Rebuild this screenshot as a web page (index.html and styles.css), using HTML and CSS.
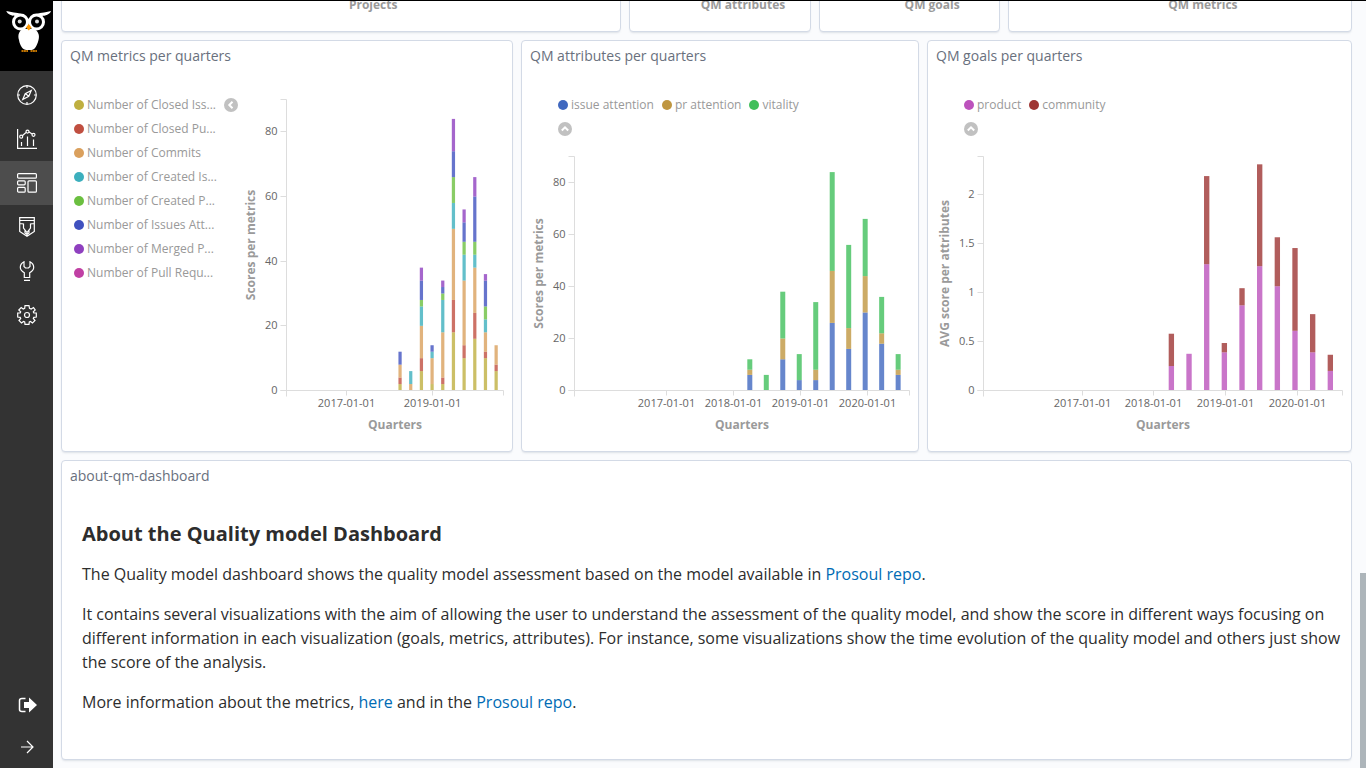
FILE: index.html
```html
<!DOCTYPE html>
<html lang="en">
<head>
<meta charset="utf-8">
<title>Quality Model Dashboard</title>
<link rel="stylesheet" href="styles.css">
</head>
<body>
<div class="app">
  <nav class="sidebar" aria-label="Main">
    <a class="logo" href="#" aria-label="Home">
      <svg viewBox="0 0 46 44" width="46" height="44">
        <path fill="#fff" d="M0.300 1C5 2.500 11 2.200 15 4C18 5.500 20.500 9 22.800 12C25 9 27.500 5.500 30.500 4C35 2.200 41 2.500 45 1C44 4.500 39 5.800 36 6L31 9H14L9.500 6C6 5.800 1.500 4.500 0.300 1Z"/>
        <circle cx="14.500" cy="12" r="8.500" fill="#fff"/><circle cx="30.500" cy="12" r="8.500" fill="#fff"/>
        <circle cx="14.500" cy="12" r="5.500"/><circle cx="30.500" cy="12" r="5.500"/>
        <circle cx="13.700" cy="11.500" r="2" fill="#ddd"/><circle cx="31" cy="11.500" r="2" fill="#ddd"/>
        <path fill="#fff" d="M17 19H28C32 21 34 25 32.500 30C31 36 28.500 40 25.500 40H20.500C17 40 14 36 13 30C11.500 25 13 21 17 19Z"/>
        <path fill="#f90" d="M22.800 14L25.500 17.500L22.800 20.500L20 17.500Z"/>
        <path stroke="#f90" stroke-width="1.600" stroke-dasharray="2 .4" d="M15.500 41H22M24.500 41H31"/>
      </svg>
    </a>
    <a class="nav-item" href="#" aria-label="Discover"><svg class="icon" viewBox="0 0 20 20"><circle cx="10" cy="10" r="9.300"/><path d="M14.200 5.500L11.800 11.300L5.800 14.500L8.200 8.700ZM8.500 8.800L11.500 11M10 1V3M10 17V19M1 10H3M17 10H19"/></svg></a>
    <a class="nav-item" href="#" aria-label="Visualize"><svg class="icon" viewBox="0 0 20 20"><path d="M.6 0V19.400H20M4.500 17V13M10.500 17V7.500M16.500 17V10.500M5.300 6.700L9 3.500M12 3L15.200 5"/><circle cx="4.200" cy="7.700" r="1.500"/><circle cx="10.500" cy="2.600" r="1.500"/><circle cx="16.500" cy="5.800" r="1.500"/></svg></a>
    <a class="nav-item nav-item--active" href="#" aria-label="Dashboard"><svg class="icon" viewBox="0 0 20 20"><rect x=".6" y=".6" width="18.800" height="4.600" rx="1"/><rect x=".6" y="7.800" width="7.600" height="4" rx="1"/><rect x=".6" y="14.400" width="7.600" height="4.800" rx="1"/><rect x="11" y="7.800" width="8.400" height="11.400" rx="1"/></svg></a>
    <a class="nav-item" href="#" aria-label="Timelion"><svg class="icon" viewBox="0 0 20 20"><path d="M2.700 .7H17.300V14.500L10 19.200L2.700 14.500ZM2.700 3.500H17.300M3 6.500L6.500 7V11L10 15.500L13.500 11V7L17 6.500M8 13.500V16L10 17.500L12 16V13.500M10 15.500V19"/></svg></a>
    <a class="nav-item" href="#" aria-label="Dev Tools"><svg class="icon" viewBox="0 0 20 20"><path d="M7 .7V5.500L8.500 7H11.500L13 5.500V.7C15.500 2 16.700 4.200 16.700 6.300C16.700 8.800 15 10.500 12.700 11.700V16.500H7.300V11.700C5 10.500 3.300 8.800 3.300 6.300C3.300 4.200 4.500 2 7 .7ZM7 19.400H13"/></svg></a>
    <a class="nav-item" href="#" aria-label="Management"><svg class="icon" viewBox="0 0 20 20"><circle cx="10" cy="10" r="2.500"/><path d="M8 .7H12L12.500 3.300L14.200 4L16.500 2.600L18.200 5L16.300 6.800L16.800 8H19.300V12L16.800 12.300L16.300 13.500L18 15.500L15.500 18L13.500 16.500L12.300 17L12 19.300H8L7.700 17L6.500 16.500L4.500 18L2 15.500L3.700 13.500L3.200 12.300L.7 12V8H3.200L3.700 6.800L1.800 5L4.200 2.600L6.200 4L7.700 3.300Z"/></svg></a>
    <span class="sidebar-space"></span>
    <a class="nav-item nav-item--foot" href="#" aria-label="Log out"><svg class="icon" viewBox="0 0 20 20"><path stroke-width="1.500" d="M8.500 3.500H5Q2.500 3.500 2.500 5.500V14.500Q2.500 16.500 5 16.500H8.500"/><path fill="#fff" stroke="none" d="M7 7H12V2.500L20 10L12 17.500V13H7Z"/></svg></a>
    <button class="nav-item nav-item--foot" type="button" aria-label="Expand"><svg class="icon" viewBox="0 0 20 20"><path d="M4 10H16M10 4L16 10L10 16"/></svg></button>
  </nav>

  <main class="content">
    <div class="row row--top">
      <section class="panel summary summary--wide">Projects</section>
      <section class="panel summary">QM attributes</section>
      <section class="panel summary">QM goals</section>
      <section class="panel summary">QM metrics</section>
    </div>

    <div class="row row--charts">
      <section class="panel">
        <h2 class="panel-title">QM metrics per quarters</h2>
        <div class="vis vis--side">
          <div class="legend legend--column">
            <div class="legend-list">
              <button type="button" class="key key--olive">Number of Closed Iss...</button>
              <button type="button" class="key key--red">Number of Closed Pu...</button>
              <button type="button" class="key key--orange">Number of Commits</button>
              <button type="button" class="key key--teal">Number of Created Is...</button>
              <button type="button" class="key key--green">Number of Created P...</button>
              <button type="button" class="key key--blue">Number of Issues Att...</button>
              <button type="button" class="key key--purple">Number of Merged P...</button>
              <button type="button" class="key key--magenta">Number of Pull Requ...</button>
            </div>
            <button type="button" class="toggle" aria-label="Toggle legend"><svg viewBox="0 0 14 14" width="14" height="14"><circle cx="7" cy="7" r="7"/><path d="M8.500 3.800L5.300 7L8.500 10.200"/></svg></button>
          </div>
          <div class="plot" id="metrics"></div>
        </div>
      </section>

      <section class="panel">
        <h2 class="panel-title">QM attributes per quarters</h2>
        <div class="vis">
          <div class="legend">
            <div class="legend-list">
              <button type="button" class="key key--royal">issue attention</button>
              <button type="button" class="key key--gold">pr attention</button>
              <button type="button" class="key key--emerald">vitality</button>
            </div>
            <button type="button" class="toggle" aria-label="Toggle legend"><svg viewBox="0 0 14 14" width="14" height="14"><circle cx="7" cy="7" r="7"/><path d="M3.800 8.500L7 5.300L10.200 8.500"/></svg></button>
          </div>
          <div class="plot" id="attributes"></div>
        </div>
      </section>

      <section class="panel">
        <h2 class="panel-title">QM goals per quarters</h2>
        <div class="vis">
          <div class="legend">
            <div class="legend-list">
              <button type="button" class="key key--orchid">product</button>
              <button type="button" class="key key--brick">community</button>
            </div>
            <button type="button" class="toggle" aria-label="Toggle legend"><svg viewBox="0 0 14 14" width="14" height="14"><circle cx="7" cy="7" r="7"/><path d="M3.800 8.500L7 5.300L10.200 8.500"/></svg></button>
          </div>
          <div class="plot" id="goals"></div>
        </div>
      </section>
    </div>

    <section class="panel about">
      <h2 class="panel-title">about-qm-dashboard</h2>
      <div class="markdown">
        <h3>About the Quality model Dashboard</h3>
        <p>The Quality model dashboard shows the quality model assessment based on the model available in <a href="#">Prosoul repo</a>.</p>
        <p>It contains several visualizations with the aim of allowing the user to understand the assessment of the quality model, and show the score in different ways focusing on different information in each visualization (goals, metrics, attributes). For instance, some visualizations show the time evolution of the quality model and others just show the score of the analysis.</p>
        <p>More information about the metrics, <a href="#">here</a> and in the <a href="#">Prosoul repo</a>.</p>
      </div>
    </section>
    <div class="scroll-thumb"></div>
  </main>
</div>
<script src="charts.js"></script>
</body>
</html>
```
FILE: styles.css
```css
* { box-sizing: border-box; }
body {
  margin: 0;
  background: #fafbfd;
  color: #2d2d2d;
  font-family: "Open Sans", "Noto Sans", sans-serif;
}
button { border: 0; padding: 0; background: none; font: inherit; color: inherit; cursor: pointer; }
a { color: #006bb4; text-decoration: none; }
h2, h3, p { margin: 0; }

.app { display: flex; height: 100vh; overflow: hidden; }

.sidebar { display: flex; flex-direction: column; flex: none; width: 53px; background: #333; }
.logo { height: 71px; margin-bottom: 2px; padding: 10px 0 0 6px; background: #000; }
.logo svg { display: block; }
.nav-item { display: flex; align-items: center; justify-content: center; height: 44px; }
.nav-item--active { background: #4d4d4d; }
.nav-item--foot { height: 42px; padding-left: 1px; }
.sidebar-space { flex: 1; }
.icon { width: 20px; height: 20px; fill: none; stroke: #fff; stroke-width: 1.2; }

.content {
  position: relative;
  display: flex;
  flex-direction: column;
  justify-content: flex-end;
  gap: 8px;
  flex: 1;
  min-width: 0;
  padding: 0 14px 8px 8px;
  border-top: 1px solid #000;
  overflow: hidden;
}
.row { display: grid; gap: 8px; flex: none; }
.row--top { grid-template-columns: 560fr 181fr 181fr 344fr; }
.row--charts { grid-template-columns: 452fr 398fr 425fr; }

.panel {
  display: flex;
  flex-direction: column;
  flex: none;
  min-width: 0;
  background: #fff;
  border: 1px solid #d3dae6;
  border-radius: 4px;
  box-shadow: 0 2px 2px -1px rgba(152, 162, 179, .3);
}
.row--charts .panel { min-height: 412px; }
.panel-title { padding: 5px 8px; font-size: 14px; line-height: 20px; font-weight: 400; color: #69707d; }

.summary { height: 64px; padding: 27px 0 0 46px; text-align: center; font-size: 12px; line-height: 18px; font-weight: 700; color: #9a9a9a; }
.summary--wide { padding-left: 64px; }

.vis { display: flex; flex-direction: column; flex: 1; padding-top: 22px; }
.vis--side { flex-direction: row; }
.legend { padding-left: 36px; font-size: 12px; line-height: 24px; color: #999; }
.legend-list { display: flex; gap: 8px; }
.key { display: block; height: 24px; text-align: left; white-space: nowrap; }
.key::before {
  content: "";
  display: inline-block;
  width: 10px;
  height: 10px;
  margin-right: 3px;
  border-radius: 50%;
  vertical-align: -1px;
  background: var(--key);
}
.legend--column { display: flex; gap: 8px; padding-left: 12px; }
.legend--column .legend-list { display: block; width: 142px; }
.legend--column .key { width: 100%; }
.toggle { display: flex; align-items: center; height: 24px; }
.toggle circle { fill: #c1c1c1; }
.toggle path { fill: none; stroke: #fff; stroke-width: 2; }
.plot { flex: 1; min-width: 0; }
.plot svg { display: block; }

.key--olive { --key: #bfaf40; }
.key--red { --key: #c04f40; }
.key--orange { --key: #daa05d; }
.key--teal { --key: #3cafbd; }
.key--green { --key: #6bbf40; }
.key--blue { --key: #4051bf; }
.key--purple { --key: #8f40bf; }
.key--magenta { --key: #c040a4; }
.key--royal { --key: #4068bf; }
.key--gold { --key: #bf9640; }
.key--emerald { --key: #40bf5b; }
.key--orchid { --key: #bc52bc; }
.key--brick { --key: #9e3533; }

.axis { fill: none; stroke: #ddd; stroke-width: 1; }
.tick { fill: #666; font-size: 11px; }
.axis-title { fill: #9a9a9a; font-size: 12px; font-weight: 700; text-anchor: middle; }
.tick--x { text-anchor: middle; }
.tick--y { text-anchor: end; }

.about { min-height: 300px; }
.markdown { padding: 27px 8px 27px 20px; font-size: 16px; line-height: 24px; }
.markdown h3 { font-size: 20px; line-height: 32px; font-weight: 700; }
.markdown p { margin-top: 16px; }
.markdown h3 + p { margin-top: 12px; }

.scroll-thumb { position: absolute; right: 0; bottom: 0; width: 6px; height: 195px; background: #adb5ba; }
```
FILE: charts.js
```js
const X_TICKS = [[0.2746, '2017-01-01'], [0.4746, '2018-01-01'], [0.6746, '2019-01-01'], [0.8746, '2020-01-01']];
const FIRST_BAR = 0.5233, BAR_STEP = 0.0492, BAR_WIDTH = 0.0149;

const charts = [
  {
    id: 'metrics', left: 48, top: 6, max: 90, yTitle: 'Scores per metrics', every: 2,
    ticks: [0, 20, 40, 60, 80],
    colors: ['#bfaf40', '#c04f40', '#daa05d', '#3cafbd', '#6bbf40', '#4051bf', '#8f40bf'],
    data: [[2, 2, 4, 0, 0, 4, 0], [0, 0, 2, 4, 0, 0, 0], [6, 4, 10, 6, 2, 6, 4], [2, 0, 8, 2, 0, 2, 0],
      [2, 2, 14, 10, 2, 2, 2], [18, 10, 22, 8, 8, 8, 10], [10, 4, 20, 8, 4, 6, 4],
      [16, 8, 14, 4, 4, 14, 6], [10, 2, 6, 4, 4, 8, 2], [6, 2, 6, 0, 0, 0, 0]]
  },
  {
    id: 'attributes', left: 52, top: 15, max: 90, yTitle: 'Scores per metrics', every: 1,
    ticks: [0, 20, 40, 60, 80],
    colors: ['#4068bf', '#bf9640', '#40bf5b'],
    data: [[6, 2, 4], [0, 0, 6], [12, 8, 18], [4, 0, 10], [4, 4, 26], [26, 20, 38], [16, 8, 32],
      [30, 14, 22], [18, 4, 14], [6, 2, 6]]
  },
  {
    id: 'goals', left: 55, top: 15, max: 2.39, yTitle: 'AVG score per attributes', every: 1,
    ticks: [0, 0.5, 1, 1.5, 2],
    colors: ['#bc52bc', '#9e3533'],
    data: [[.25, .33], [.375, 0], [1.29, .9], [.39, .095], [.87, .175], [1.27, 1.04], [1.065, .5],
      [.61, .845], [.39, .39], [.2, .165]]
  }
];

function draw(c) {
  const host = document.getElementById(c.id);
  host.textContent = '';
  const w = host.clientWidth, h = host.clientHeight;
  const l = c.left + 0.5, r = w - 8.5, t = c.top + 0.5, b = Math.round(h - 61) + 0.5;
  const span = r - l, scale = (b - t) / c.max;
  let out = '';
  c.data.forEach((stack, i) => {
    let y = b;
    const bw = span * BAR_WIDTH;
    const x = l + span * (FIRST_BAR + i * BAR_STEP) - bw / 2;
    stack.forEach((v, s) => {
      if (!v) return;
      y -= v * scale;
      out += `<rect x="${x}" y="${y}" width="${bw}" height="${v * scale}" fill="${c.colors[s]}" fill-opacity=".8"/>`;
    });
  });
  let path = `M${l - 6} ${t}H${l}V${b + 6}M${l - 6} ${b}H${r}V${b + 5}`;
  c.ticks.forEach(v => {
    const y = Math.round(b - v * scale - 0.5) + 0.5;
    path += `M${l - 6} ${y}H${l}`;
    out += `<text class="tick tick--y" x="${l - 9}" y="${y + 3}">${v}</text>`;
  });
  X_TICKS.forEach(([f, label], i) => {
    if (i % c.every) return;
    const x = Math.round(l + span * f - 0.5) + 0.5;
    path += `M${x} ${b}V${b + 5}`;
    out += `<text class="tick tick--x" x="${x}" y="${b + 16}">${label}</text>`;
  });
  const mid = (t + b) / 2, tx = c.id === 'goals' ? l - 35 : l - 32;
  out += `<path class="axis" d="${path}"/>`;
  out += `<text class="axis-title" x="${(l + r) / 2}" y="${b + 38}">Quarters</text>`;
  out += `<text class="axis-title" transform="translate(${tx} ${mid}) rotate(-90)">${c.yTitle}</text>`;
  host.innerHTML = `<svg width="${w}" height="${h}" role="img" aria-label="${c.yTitle}">${out}</svg>`;
}

charts.forEach(draw);
window.addEventListener('resize', () => charts.forEach(draw));
```
